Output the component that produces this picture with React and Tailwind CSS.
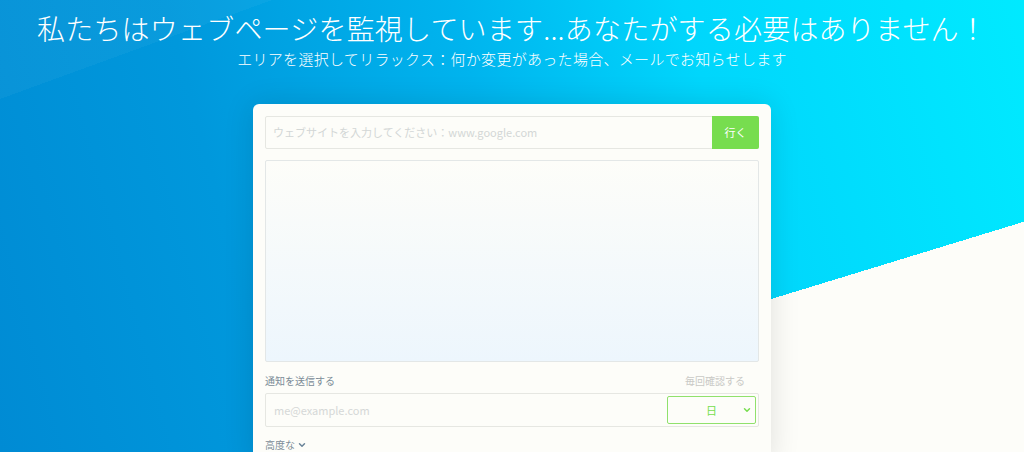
import { ChevronDown } from "lucide-react";

export default function App() {
  return (
    <div className="h-screen overflow-hidden bg-[linear-gradient(163deg,transparent_69.9%,#fdfdf9_69.9%),linear-gradient(160deg,rgba(255,255,255,0.035)_0%,rgba(255,255,255,0.035)_12%,transparent_12%),linear-gradient(75deg,#008bd4_0%,#0098dc_25%,#00b4ee_50%,#00d6fc_70%,#00eaff_100%)] font-['Noto_Sans_CJK_JP','Noto_Sans',sans-serif]">
      <header className="pt-[10px] text-center text-white">
        <h1 className="text-[28px] font-light leading-[36px] tracking-[0.2px]">
          私たちはウェブページを監視しています...あなたがする必要はありません！
        </h1>
        <p className="mt-[2px] text-[15px] font-light leading-[22px] tracking-[0.3px]">
          エリアを選択してリラックス：何か変更があった場合、メールでお知らせします
        </p>
      </header>

      <div className="mx-auto mt-[34px] w-[518px] rounded-[6px] bg-[#fdfdf9] p-[12px] shadow-[0_0_30px_rgba(0,0,0,0.12)]">
        <div className="flex h-[33px] rounded-[2px] border border-[#e6e7e2]">
          <input
            className="flex-1 bg-transparent px-[7px] text-[11px] text-[#555] placeholder:text-[#d3d7d6] outline-none"
            placeholder="ウェブサイトを入力してください：www.google.com"
          />
          <button className="-my-px -mr-px w-[47px] rounded-r-[2px] bg-[#77dd4f] text-[11px] text-white">
            行く
          </button>
        </div>

        <div className="mt-[11px] h-[202px] rounded-[2px] border border-[#e3e7e7] bg-[linear-gradient(180deg,#fdfdf9,#edf6fd)]" />

        <div className="mt-[12px] flex items-center justify-between pr-[14px] text-[10px] leading-[14px]">
          <span className="text-[#7b8c97]">通知を送信する</span>
          <span className="text-[#c9c9c6]">毎回確認する</span>
        </div>

        <div className="mt-[5px] flex h-[34px] items-center rounded-[2px] border border-[#e6e7e2] pr-[2px]">
          <input
            className="flex-1 bg-transparent px-[8px] text-[11px] text-[#555] placeholder:text-[#d5d8d7] outline-none"
            placeholder="me@example.com"
          />
          <div className="relative flex h-[28px] w-[89px] items-center justify-center rounded-[2px] border border-[#90e16c] text-[11px] text-[#77dd4f]">
            日
            <ChevronDown className="absolute right-[3px] h-[10px] w-[10px]" strokeWidth={3.5} />
          </div>
        </div>

        <div className="mt-[10px] flex items-center gap-[2px] text-[10px] text-[#7b8c97]">
          高度な
          <ChevronDown className="h-[10px] w-[10px] text-[#6a8499]" strokeWidth={3.5} />
        </div>
      </div>
    </div>
  );
}
